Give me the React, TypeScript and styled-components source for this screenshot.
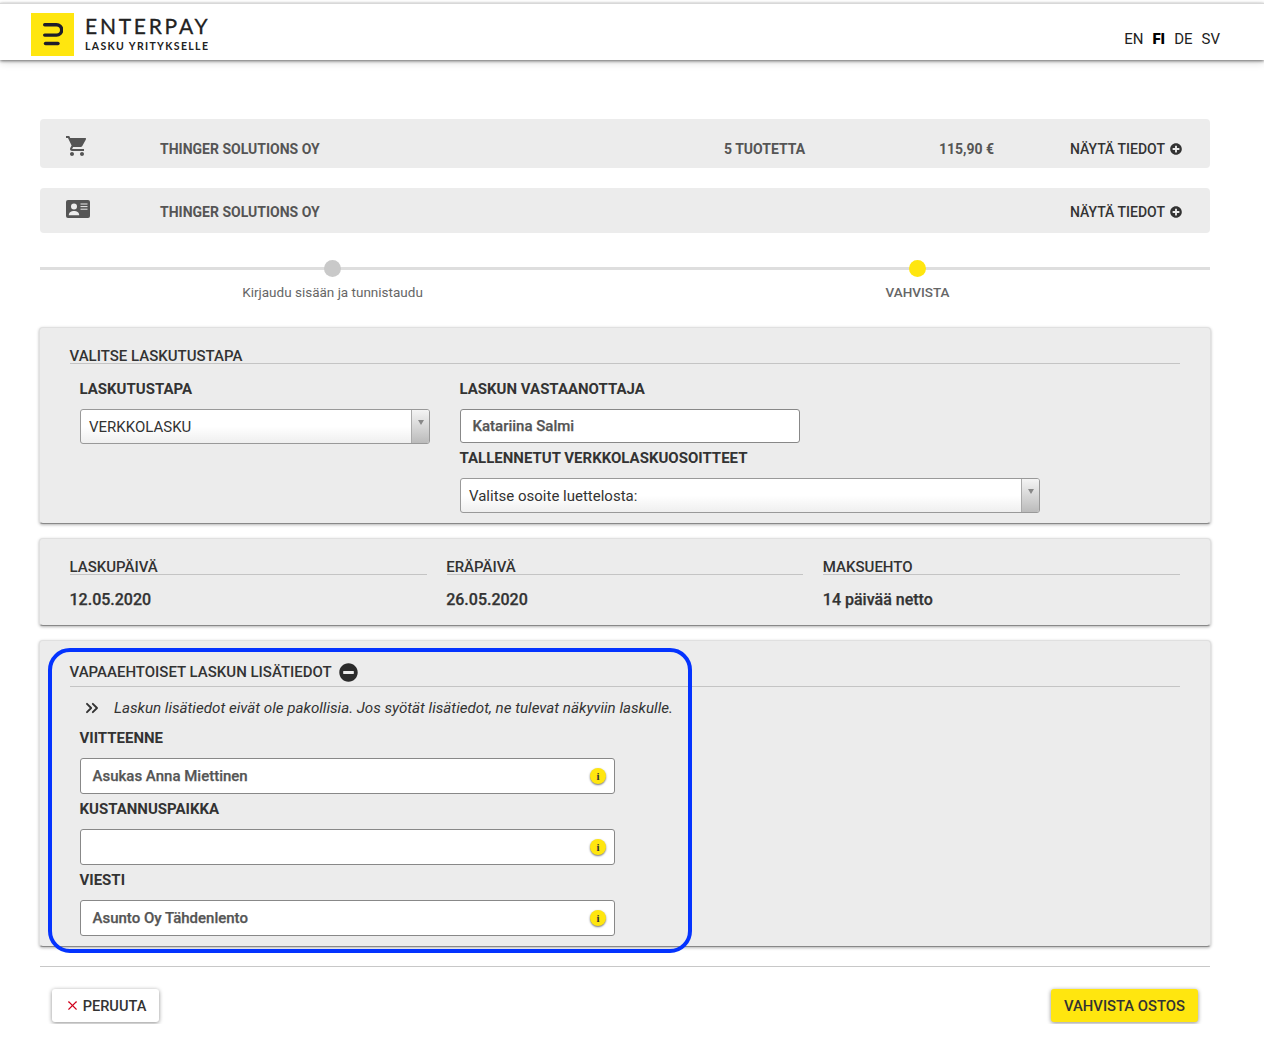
import React from "react";
import styled, { createGlobalStyle } from "styled-components";
import { MdShoppingCart } from "react-icons/md";
import { FaPlusCircle, FaMinusCircle } from "react-icons/fa";
import { ChevronsRight, X } from "lucide-react";

const Global = createGlobalStyle`
  html, body { margin: 0; padding: 0; background: #fff; }
  body { font-family: Roboto, "Liberation Sans", sans-serif; color: #333; }
  * { box-sizing: border-box; }
`;
const Page = styled.div`
  position: relative; width: 1264px; height: 1063px; overflow: hidden; background: #fff; padding-top: 3px;
`;
const Header = styled.header`
  height: 57px; border-top: 1px solid #d8d8d8; background: #fff;
  box-shadow: 0 1px 3px rgba(0,0,0,.55), 0 3px 8px rgba(0,0,0,.12);
  display: flex; justify-content: space-between; padding: 9px 44px 0 31px;
`;
const Logo = styled.div`display: flex; gap: 11px;`;
const LogoMark = styled.div`
  width: 43px; height: 43px; background: #ffe60f; display: flex; align-items: center; justify-content: center;
`;
const LogoText = styled.div`display: flex; flex-direction: column; padding-top: 2px;`;
const LogoName = styled.div`
  font-family: Lato, sans-serif; font-size: 21px; line-height: 21px; letter-spacing: 2.75px; font-weight: 400; color: #222; -webkit-text-stroke: .3px #222;
`;
const LogoSub = styled.div`
  font-family: Lato, sans-serif; font-size: 10.5px; line-height: 12px; margin-top: 4px; letter-spacing: 1.35px; font-weight: 700; color: #222;
`;
const Langs = styled.nav`display: flex; gap: 9px; font-size: 15px; line-height: 16px; padding-top: 18px; color: #222;`;
const Lang = styled.span<{ $active?: boolean }>`font-weight: ${p => (p.$active ? 900 : 400)}; color: ${p => (p.$active ? "#000" : "#222")};`;
const Main = styled.main`width: 1170px; margin: 59px 0 0 40px; display: flex; flex-direction: column;`;
const SummaryBar = styled.div<{ $h: number; $gap: number; $pt: number }>`
  height: ${p => p.$h}px; margin-bottom: ${p => p.$gap}px; padding-top: ${p => p.$pt}px; background: #ececec; border-radius: 4px;
  display: grid; grid-template-columns: 120px 564px 215px 131px 1fr; align-items: center;
  font-size: 14px; font-weight: 700; color: #555;
`;
const BarIcon = styled.div<{ $top: number; $left: number }>`
  padding-left: ${p => p.$left}px; display: flex; color: #555; transform: translateY(${p => p.$top}px);
`;
const BarText = styled.div`line-height: 16px;`;
const Toggle = styled.div`
  grid-column: 5; display: flex; align-items: center; gap: 5px; color: #333; font-weight: 500; white-space: nowrap;
`;
const Stepper = styled.div`
  position: relative; height: 74px; display: grid; grid-template-columns: 1fr 1fr;
  &::before { content: ""; position: absolute; left: 0; right: 0; top: 14px; height: 3px; background: #dedede; }
`;
const Step = styled.div`
  position: relative; display: flex; flex-direction: column; align-items: center; padding-top: 7px; color: #666; font-size: 13.5px;
`;
const Dot = styled.span<{ $on?: boolean }>`
  width: 17px; height: 17px; border-radius: 50%; background: ${p => (p.$on ? "#ffe60f" : "#c9c9c9")};
`;
const StepLabel = styled.span<{ $bold?: boolean }>`
  margin-top: 8px; line-height: 15px; font-weight: ${p => (p.$bold ? 500 : 400)};
`;
const Card = styled.section<{ $h: number }>`
  height: ${p => p.$h}px; margin-bottom: 14px; background: #ececec; border-radius: 4px;
  border: 1px solid #e0e0e0; border-bottom-color: #888;
  box-shadow: 0 1px 3px rgba(0,0,0,.3);
  margin-left: -1px; margin-right: -1px; padding: 19px 30px 0 30px;
`;
const CardTitle = styled.h2`
  margin: 0; height: 17px; padding-top: 2px; font-size: 15px; line-height: 17px; font-weight: 500; color: #333; border-bottom: 1px solid #c4c4c4;
  display: flex; align-items: center; white-space: nowrap; text-indent: -.5px;
`;
const OptionalTitle = styled(CardTitle)`height: 27px; padding: 0 0 2px; gap: 7px;`;
const Row = styled.div`display: flex; padding-left: 10px;`;
const Col = styled.div<{ $w: number }>`width: ${p => p.$w}px; display: flex; flex-direction: column;`;
const Label = styled.label<{ $mt: number }>`
  display: block; font-size: 15px; font-weight: 700; line-height: 17px; color: #333; margin-top: ${p => p.$mt}px; white-space: nowrap; text-indent: -.5px;
`;
const SelectBox = styled.div<{ $w: number }>`
  width: ${p => p.$w}px; height: 35px; margin-top: 11px; border: 1px solid #999; border-radius: 3px;
  background: linear-gradient(#fff 50%, #efefef); display: flex; overflow: hidden;
`;
const SelectText = styled.div`flex: 1; padding-left: 8px; font-size: 15px; line-height: 35px; color: #333;`;
const SelectArrow = styled.div`
  width: 18px; border-left: 1px solid #aaa; background: linear-gradient(#f4f4f4, #bbb);
  display: flex; justify-content: center; padding-top: 10px;
  &::before { content: ""; width: 0; height: 0; border: 3px solid transparent; border-top: 5px solid #888; }
`;
const InputBox = styled.div<{ $w: number; $h: number; $mt: number }>`
  position: relative; width: ${p => p.$w}px; height: ${p => p.$h}px; margin-top: ${p => p.$mt}px; background: #fff; border: 1px solid #888; border-radius: 3px;
  padding-left: 11.5px; font-size: 15px; font-weight: 500; color: #555; line-height: ${p => p.$h - 2}px; -webkit-text-stroke: .25px #555;
`;
const InfoDot = styled.span`
  position: absolute; right: 8px; top: 9px; width: 16px; height: 16px; border-radius: 50%;
  background: #ffe60f; box-shadow: 0 1px 2px rgba(0,0,0,.55); color: #333; -webkit-text-stroke: 0;
  font: 700 11px/16px "Liberation Serif", serif; text-align: center;
`;
const DateGrid = styled.div`display: grid; grid-template-columns: repeat(3, 1fr); column-gap: 20px;`;
const DateCol = styled.div``;
const DateValue = styled.div`margin-top: 15px; font-size: 16px; line-height: 19px; font-weight: 500; color: #333; -webkit-text-stroke: .25px #333; text-indent: -.5px;`;
const Hint = styled.div`
  display: flex; align-items: center; padding-left: 14px; margin-top: 11px; height: 20px;
  font-size: 15.15px; font-style: italic; color: #333; white-space: nowrap;
`;
const HintIcon = styled.span`display: flex; width: 32px; margin-left: -2px;`;
const OptField = styled.div`padding-left: 10px;`;
const Divider = styled.hr`margin: 5px 0 0; border: 0; border-top: 1px solid #c8c8c8;`;
const Clip = styled.div`height: 57px; overflow: hidden; margin: 0 -12px; padding: 0 12px;`;
const Actions = styled.div`
  display: flex; justify-content: space-between; padding: 22px 12px 0 12px;
`;
const CancelBtn = styled.button`
  height: 33px; width: 107px; border: 0; border-radius: 3px; background: #fff; box-shadow: 0 1px 4px rgba(0,0,0,.45);
  display: flex; align-items: center; justify-content: center; gap: 3px; padding: 0; color: #333;
  font: 500 14.6px Roboto, sans-serif;
`;
const ConfirmBtn = styled.button`
  height: 33px; width: 147px; border: 0; border-radius: 3px; background: #ffe60f; box-shadow: 0 1px 4px rgba(0,0,0,.45);
  color: #333; font: 500 14.8px Roboto, sans-serif; padding: 0;
`;
const Highlight = styled.div`
  position: absolute; left: 48px; top: 648px; width: 644px; height: 305px; border: 4px solid #0433ff; border-radius: 22px; pointer-events: none;
`;

const Plus = () => <FaPlusCircle size={12} color="#333" />;
const Info = () => <InfoDot>i</InfoDot>;

export default function App() {
  return (
    <Page>
      <Global />
      <Header>
        <Logo>
          <LogoMark>
            <svg width="20" height="23" viewBox="0 0 20 23" fill="none" stroke="#1d1d2b" strokeWidth="3.4" strokeLinecap="round">
              <path d="M1.7 1.7H13.5a5 5 0 0 1 0 10.4H1.7" />
              <path d="M2.5 20.5H15" />
            </svg>
          </LogoMark>
          <LogoText>
            <LogoName>ENTERPAY</LogoName>
            <LogoSub>LASKU YRITYKSELLE</LogoSub>
          </LogoText>
        </Logo>
        <Langs>
          <Lang>EN</Lang>
          <Lang $active>FI</Lang>
          <Lang>DE</Lang>
          <Lang>SV</Lang>
        </Langs>
      </Header>
      <Main>
        <SummaryBar $h={49} $gap={20} $pt={10}>
          <BarIcon $top={-3} $left={25}><MdShoppingCart size={24} /></BarIcon>
          <BarText>THINGER SOLUTIONS OY</BarText>
          <BarText>5 TUOTETTA</BarText>
          <BarText>115,90 €</BarText>
          <Toggle>NÄYTÄ TIEDOT <Plus /></Toggle>
        </SummaryBar>
        <SummaryBar $h={45} $gap={20} $pt={2}>
          <BarIcon $top={-3} $left={26}>
            <svg width="24" height="18" viewBox="0 0 24 18">
              <rect width="24" height="18" rx="2" fill="#555" />
              <circle cx="8" cy="6.6" r="3" fill="#ececec" />
              <path d="M2.8 15.2c0-3 2.6-4.2 5.2-4.2s5.2 1.2 5.2 4.2z" fill="#ececec" />
              <path d="M14.5 4h7M14.5 6.6h7M14.5 9.2h7" stroke="#ececec" strokeWidth="1" />
            </svg>
          </BarIcon>
          <BarText>THINGER SOLUTIONS OY</BarText>
          <Toggle>NÄYTÄ TIEDOT <Plus /></Toggle>
        </SummaryBar>
        <Stepper>
          <Step><Dot /><StepLabel>Kirjaudu sisään ja tunnistaudu</StepLabel></Step>
          <Step><Dot $on /><StepLabel $bold>VAHVISTA</StepLabel></Step>
        </Stepper>
        <Card $h={197}>
          <CardTitle>VALITSE LASKUTUSTAPA</CardTitle>
          <Row>
            <Col $w={380}>
              <Label $mt={17}>LASKUTUSTAPA</Label>
              <SelectBox $w={350}>
                <SelectText>VERKKOLASKU</SelectText>
                <SelectArrow />
              </SelectBox>
            </Col>
            <Col $w={600}>
              <Label $mt={17}>LASKUN VASTAANOTTAJA</Label>
              <InputBox $w={340} $h={34} $mt={11}>Katariina Salmi</InputBox>
              <Label $mt={7}>TALLENNETUT VERKKOLASKUOSOITTEET</Label>
              <SelectBox $w={580}>
                <SelectText>Valitse osoite luettelosta:</SelectText>
                <SelectArrow />
              </SelectBox>
            </Col>
          </Row>
        </Card>
        <Card $h={88}>
          <DateGrid>
            <DateCol><CardTitle>LASKUPÄIVÄ</CardTitle><DateValue>12.05.2020</DateValue></DateCol>
            <DateCol><CardTitle>ERÄPÄIVÄ</CardTitle><DateValue>26.05.2020</DateValue></DateCol>
            <DateCol><CardTitle>MAKSUEHTO</CardTitle><DateValue>14 päivää netto</DateValue></DateCol>
          </DateGrid>
        </Card>
        <Card $h={307}>
          <OptionalTitle>
            VAPAAEHTOISET LASKUN LISÄTIEDOT <FaMinusCircle size={19} color="#2b2b2b" />
          </OptionalTitle>
          <Hint>
            <HintIcon><ChevronsRight size={20} strokeWidth={2.3} color="#333" /></HintIcon>
            Laskun lisätiedot eivät ole pakollisia. Jos syötät lisätiedot, ne tulevat näkyviin laskulle.
          </Hint>
          <OptField>
            <Label $mt={12}>VIITTEENNE</Label>
            <InputBox $w={535} $h={36} $mt={11}>Asukas Anna Miettinen<Info /></InputBox>
            <Label $mt={7}>KUSTANNUSPAIKKA</Label>
            <InputBox $w={535} $h={36} $mt={11}><Info /></InputBox>
            <Label $mt={7}>VIESTI</Label>
            <InputBox $w={535} $h={36} $mt={11}>Asunto Oy Tähdenlento<Info /></InputBox>
          </OptField>
        </Card>
        <Divider />
        <Clip>
          <Actions>
            <CancelBtn><X size={15} color="#d0021b" strokeWidth={1.8} /> PERUUTA</CancelBtn>
            <ConfirmBtn>VAHVISTA OSTOS</ConfirmBtn>
          </Actions>
        </Clip>
      </Main>
      <Highlight />
    </Page>
  );
}
